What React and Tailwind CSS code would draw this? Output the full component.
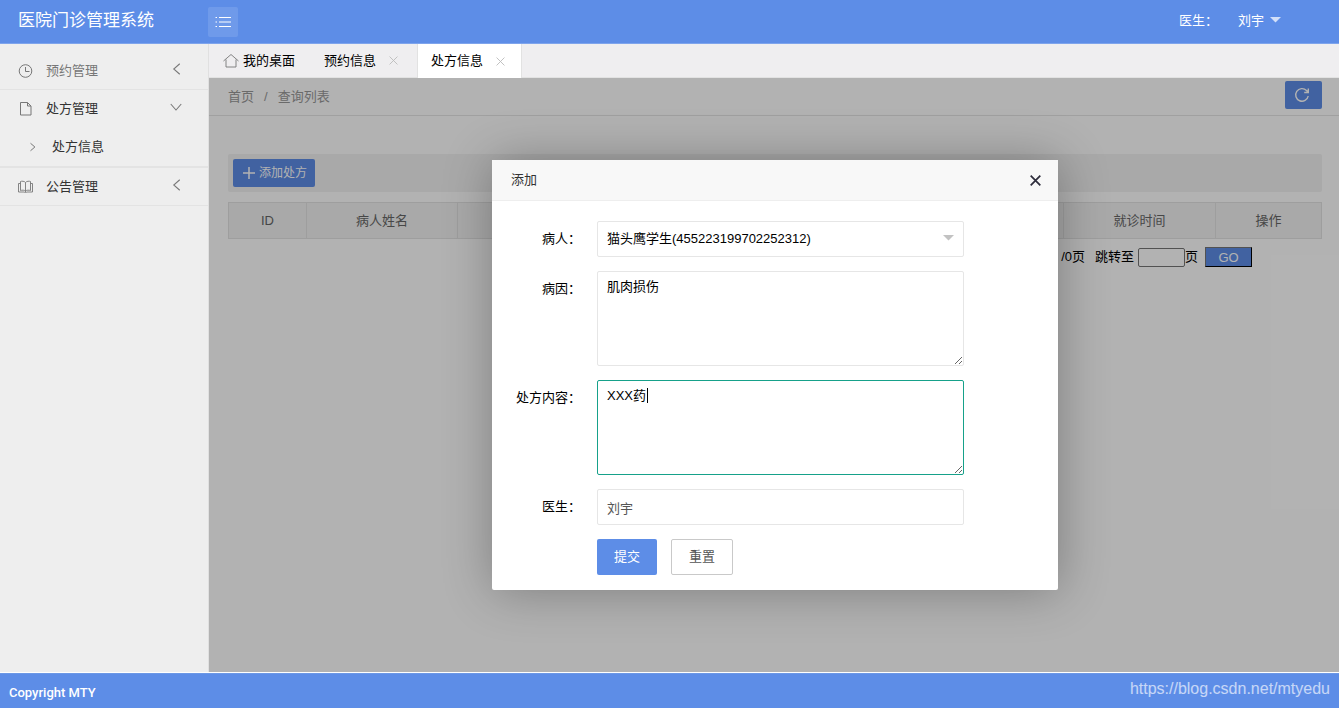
import { useState } from 'react';

const columns = [
  { title: 'ID', width: 'w-[78px]' },
  { title: '病人姓名', width: 'w-[151px]' },
  { title: '', width: '' },
  { title: '', width: '' },
  { title: '', width: '' },
  { title: '', width: '' },
  { title: '就诊时间', width: 'w-[152px]' },
  { title: '操作', width: 'w-[106px]' },
];

function Icon({ className, children, size = 16 }) {
  return (
    <svg width={size} height={size} viewBox="0 0 16 16" fill="none" stroke="currentColor" className={className} aria-hidden="true">
      {children}
    </svg>
  );
}

function CloseIcon({ className, size }) {
  return (
    <Icon className={className} size={size}>
      <path d="M1 1l14 14M15 1L1 15" />
    </Icon>
  );
}

function MenuItem({ icon, label, open, muted }) {
  return (
    <a href="#" className="flex h-[38px] items-center border-b border-[#e3e3e3] pr-[26px] pl-[18px]">
      <span className="w-7 text-[#777]">{icon}</span>
      <span className={muted ? 'flex-1 text-[#777]' : 'flex-1 text-[#333]'}>{label}</span>
      <Icon size={12} className="mb-1 text-[#777]">
        {open ? <path d="M1 4l7 8 7-8" strokeWidth="1.4" /> : <path d="M13 1L5 8l8 7" strokeWidth="1.4" />}
      </Icon>
    </a>
  );
}

function Sidebar() {
  return (
    <nav className="w-[209px] shrink-0 border-r border-[#e0e0e0] bg-[#eee] pt-2">
      <MenuItem
        muted
        label="预约管理"
        icon={<Icon><circle cx="7.5" cy="8" r="6.3" /><path d="M7.5 4V8.5H11.5" /></Icon>}
      />
      <div className="border-b border-[#e3e3e3]">
        <div className="-mb-px">
          <MenuItem
            open
            label="处方管理"
            icon={<Icon><path d="M2.500 1.500h7l3.500 3.500v9h-10.500zM9.500 1.500V5H13" /></Icon>}
          />
        </div>
        <a href="#" className="flex h-10 items-center border-b border-[#e3e3e3] bg-[#eee] pl-7 text-[#333]">
          <Icon size={10} className="mr-[14px] text-[#777]"><path d="M4 2l7 6-7 6" strokeWidth="1.6" /></Icon>
          处方信息
        </a>
      </div>
      <MenuItem
        label="公告管理"
        icon={
          <Icon>
            <path d="M7.500 3.500C6.500 2 3.500 2 2.500 2.500v9c1.500-.5 4-.5 5 .5 1-1 3.500-1 5-.5v-9c-1-.5-4-.5-5 1zM7.500 3.500V13M2.500 4.500h-2v8.500h6l1 1 1-1h6v-8.500h-2" strokeWidth=".9" />
          </Icon>
        }
      />
    </nav>
  );
}

function Tabs() {
  return (
    <div className="flex h-[34px] border-b border-[#e2e2e2] bg-[#efeef0] text-black">
      <button type="button" className="flex items-center gap-1 px-[14px]">
        <Icon className="text-[#777]"><path d="M.5 8L8 1.500 15.500 8M3 6.500v7.500h10v-7.500" strokeWidth=".9" /></Icon>
        我的桌面
      </button>
      <button type="button" className="flex items-center gap-[13px] pr-[19px] pl-[15px]">
        预约信息
        <CloseIcon size={9} className="stroke-[1.6] text-[#bbb]" />
      </button>
      <button type="button" className="-mb-px flex items-center gap-[13px] border-x border-[#e2e2e2] bg-white pr-4 pl-[13px]">
        处方信息
        <CloseIcon size={9} className="stroke-[1.6] text-[#bbb]" />
      </button>
    </div>
  );
}

function PrescriptionList() {
  return (
    <div>
      <div className="flex h-[38px] items-center justify-between border-b border-[#e5e5e5] pr-[17px] pl-[19px]">
        <div className="flex gap-[10px] text-[#999]">
          <a href="#">首页</a>
          <span>/</span>
          <a href="#">查询列表</a>
        </div>
        <button type="button" aria-label="刷新" className="mb-1 flex h-7 w-[37px] items-center justify-center rounded-xs bg-[#5d8de7] pr-[3px] text-white">
          <Icon><path d="M14.200 9A6.300 6.300 0 1 1 12.500 3.500L14 5M14.300 1.500V5.500H10.200" strokeWidth="1.4" /></Icon>
        </button>
      </div>
      <div className="pt-[38px] pr-[17px] pl-[19px]">
        <div className="flex h-[38px] items-center rounded-xs bg-[#f2f2f2] px-[5px]">
          <button type="button" className="flex h-7 items-center gap-1 rounded-xs bg-[#5d8de7] pr-2 pl-[10px] text-xs text-white">
            <Icon size={12}><path d="M8 0v16M0 8h16" strokeWidth="2" /></Icon>
            添加处方
          </button>
        </div>
        <table className="mt-[10px] w-full table-fixed border-collapse">
          <thead>
            <tr className="h-9 bg-[#f2f2f2] text-[#666]">
              {columns.map((col, i) => (
                <th key={i} className={`${col.width} border border-[#e3e3e3] font-normal`}>{col.title}</th>
              ))}
            </tr>
          </thead>
        </table>
        <div className="mt-2 flex h-5 items-center justify-end pr-[70px] text-black">
          <span className="mr-[10px]">/0页</span>
          <label htmlFor="page" className="mr-1">跳转至</label>
          <input id="page" className="h-[19px] w-[47px] rounded-xs border border-[#767676] bg-white px-1" />
          <span className="mr-[7px]">页</span>
          <button type="button" className="h-5 w-[47px] border border-t-[#767676] border-r-black border-b-black border-l-[#767676] bg-[#5d8de7] text-white">GO</button>
        </div>
      </div>
    </div>
  );
}

function Field({ id, label, children }) {
  return (
    <div className="flex">
      <label htmlFor={id} className="w-[105px] pr-4 text-right leading-9 text-black">{label}</label>
      <div className="relative flex flex-1">{children}</div>
    </div>
  );
}

function AddDialog() {
  const [form, setForm] = useState({ patient: '1', cause: '肌肉损伤', content: 'XXX药' });

  return (
    <div role="dialog" aria-label="添加" className="w-[566px] rounded-xs bg-white shadow-[1px_1px_50px_rgba(0,0,0,0.3)]">
      <div className="flex h-[41px] items-center justify-between border-b border-[#eee] bg-[#f8f8f8] pr-[17px] pl-[19px] text-[#333]">
        <h2>添加</h2>
        <button type="button" aria-label="关闭">
          <CloseIcon size={11} className="stroke-[2.5] text-[#2e2d3c]" />
        </button>
      </div>
      <form className="flex flex-col gap-[14px] pt-5 pr-[94px] pb-[15px]" onSubmit={(e) => e.preventDefault()}>
        <Field id="patient" label="病人：">
          <select id="patient" value={form.patient} onChange={(e) => setForm({ ...form, patient: e.target.value })} className="h-9 w-full appearance-none rounded-xs border border-[#e6e6e6] bg-white pl-[9px] text-black">
            <option value="1">猫头鹰学生(455223199702252312)</option>
          </select>
          <svg width="11" height="6" viewBox="0 0 11 6" className="pointer-events-none absolute top-[14px] right-[10px]" aria-hidden="true">
            <path d="M0 0h11L5.500 5.500z" fill="#c2c2c2" />
          </svg>
        </Field>
        <Field id="cause" label="病因：">
          <textarea id="cause" value={form.cause} onChange={(e) => setForm({ ...form, cause: e.target.value })} className="h-[95px] w-full resize rounded-xs border border-[#e6e6e6] px-[9px] py-[5px] leading-5 text-black outline-none" />
        </Field>
        <Field id="content" label="处方内容：">
          <textarea id="content" value={form.content} onChange={(e) => setForm({ ...form, content: e.target.value })} className="h-[95px] w-full resize rounded-xs border border-[#16a18a] px-[9px] py-[5px] leading-5 text-black caret-transparent outline-none" />
          <span className="pointer-events-none absolute top-2 left-[50px] h-[15px] w-px bg-black" />
        </Field>
        <Field id="doctor" label="医生：">
          <input id="doctor" value="刘宇" readOnly className="h-9 w-full rounded-xs border border-[#e6e6e6] px-[9px] text-[#555] outline-none" />
        </Field>
        <div className="flex gap-[14px] pl-[105px]">
          <button type="submit" className="h-9 w-[60px] rounded-xs bg-[#5d8de7] text-white">提交</button>
          <button type="reset" className="h-9 w-[62px] rounded-xs border border-[#c9c9c9] bg-white text-[#555]">重置</button>
        </div>
      </form>
    </div>
  );
}

export default function App() {
  return (
    <div className="flex h-screen flex-col bg-white font-['Liberation_Sans','Noto_Sans_CJK_SC',sans-serif] text-[13px] leading-5">
      <header className="flex h-11 shrink-0 items-center border-b border-[#7ea4ec] bg-[#5d8de7] pr-[58px] pl-[18px] text-white">
        <h1 className="w-[190px] pb-[2px] text-[17px]">医院门诊管理系统</h1>
        <button type="button" aria-label="菜单" className="flex size-[30px] items-center justify-center rounded-xs bg-[#6f9aea]">
          <Icon><path d="M4 3.500h12M4 8h12M4 12.500h12M.5 3.500h1.500M.5 8h1.500M.5 12.500h1.500" /></Icon>
        </button>
        <span className="ml-auto pb-[2px]">医生：</span>
        <button type="button" className="ml-5 flex items-center gap-[6px] pb-[2px]">
          刘宇
          <svg width="11" height="6" viewBox="0 0 11 6" className="mb-[2px]" aria-hidden="true">
            <path d="M0 0h11L5.500 5.500z" fill="#d3e0f9" />
          </svg>
        </button>
      </header>
      <div className="flex min-h-0 flex-1">
        <Sidebar />
        <div className="flex min-w-0 flex-1 flex-col">
          <Tabs />
          <main className="relative flex-1 overflow-hidden">
            <PrescriptionList />
            <div className="absolute inset-0 flex items-center justify-center bg-black/30 pl-[2px]">
              <AddDialog />
            </div>
          </main>
        </div>
      </div>
      <footer className="mt-px flex h-[35px] shrink-0 items-center justify-between border-t border-[#6c98e6] bg-[#5d8de7] px-[9px] text-white">
        <span className="pt-1 font-['Roboto',sans-serif] font-medium">Copyright MTY</span>
        <a href="https://blog.csdn.net/mtyedu" className="pb-1 text-base text-white/65">https://blog.csdn.net/mtyedu</a>
      </footer>
    </div>
  );
}
